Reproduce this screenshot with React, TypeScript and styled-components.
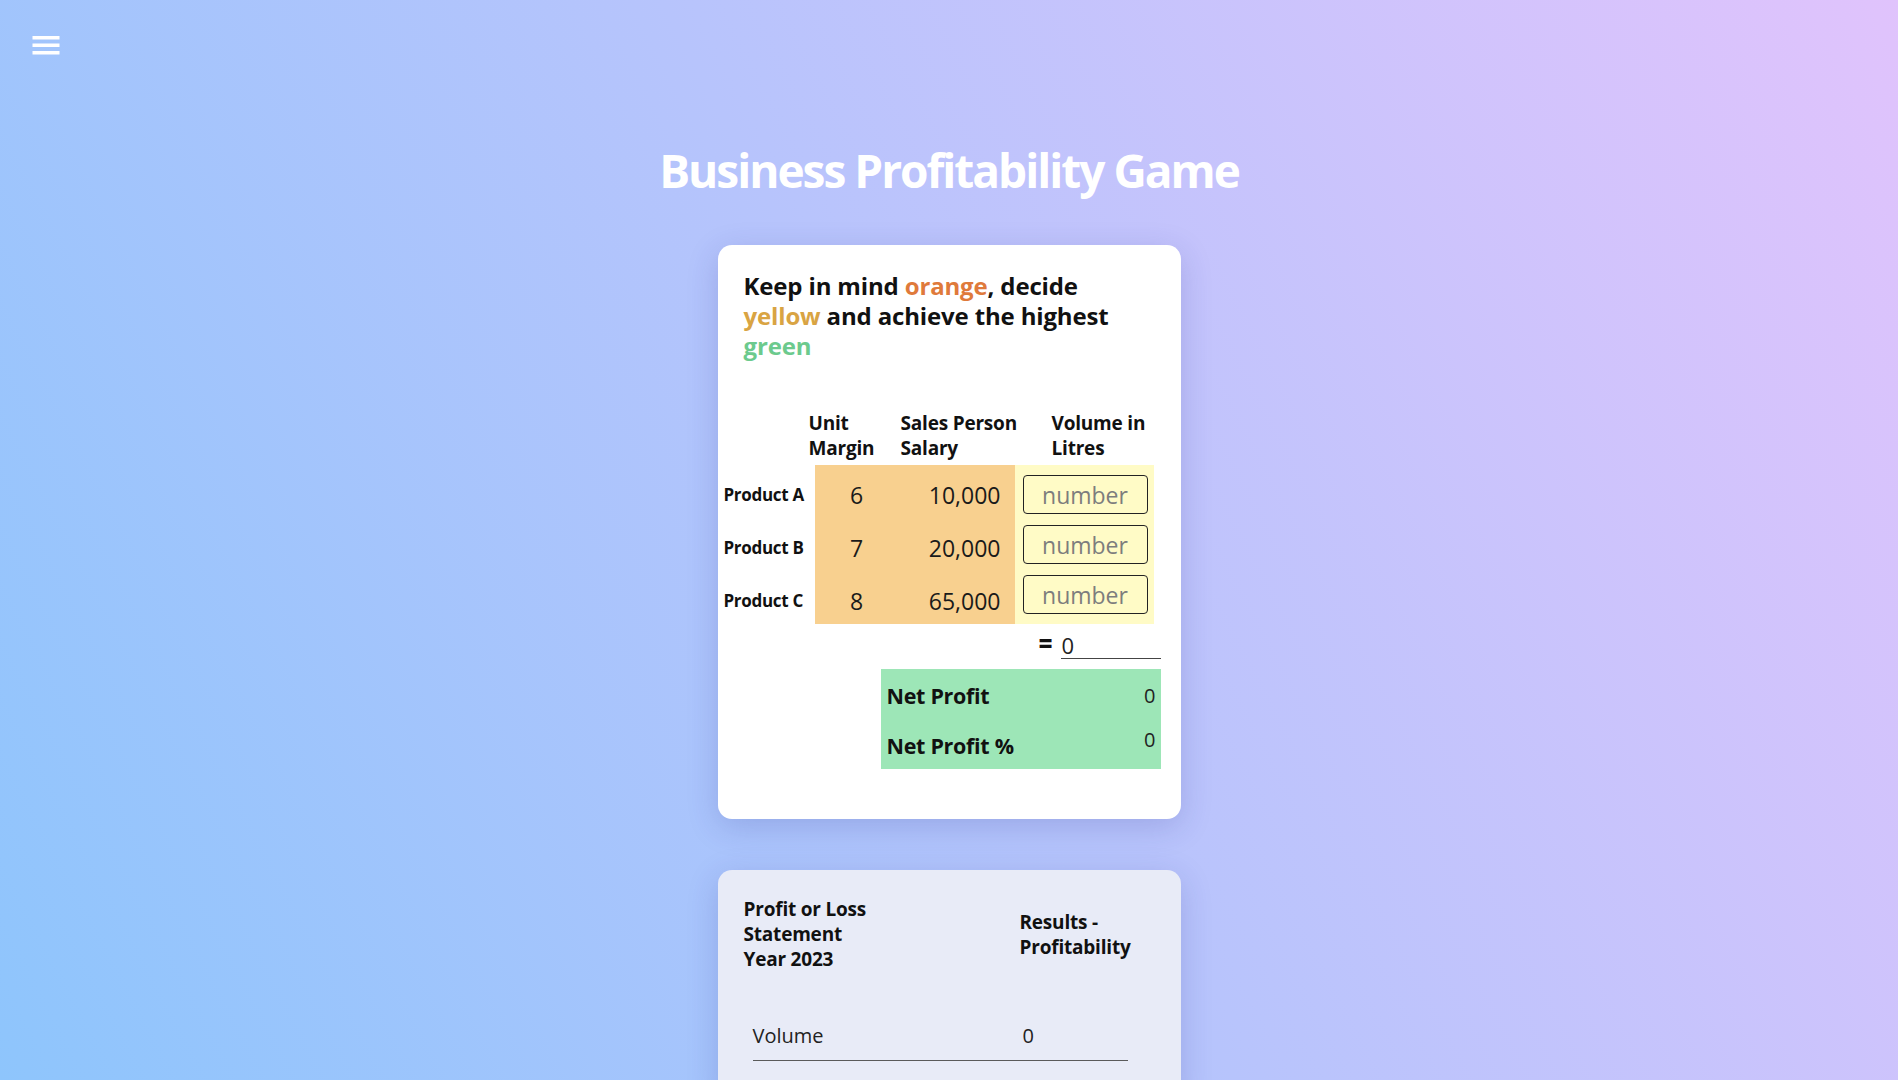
import React from "react";
import styled, { createGlobalStyle } from "styled-components";

const GlobalStyle = createGlobalStyle`
  html { scrollbar-width: none; }
  html::-webkit-scrollbar { display: none; }
  body {
    margin: 0;
    min-height: 100vh;
    font-family: "Open Sans", "Noto Sans", "DejaVu Sans", sans-serif;
    color: #111;
    background: linear-gradient(62deg, #8ec5fc 0%, #e0c3fc 100%) fixed;
  }
  * { box-sizing: border-box; }
`;

const Page = styled.div`
  display: flex;
  flex-direction: column;
  align-items: center;
  padding-bottom: 60px;
`;

const TopBar = styled.div`
  align-self: stretch;
  display: flex;
  padding: 27px 0 0 28px;
`;

const MenuButton = styled.button`
  width: 36px;
  height: 36px;
  padding: 0;
  border: none;
  background: transparent;
  display: flex;
  cursor: pointer;
`;

const Title = styled.h1`
  margin: 80px 0 0;
  font-size: 46px;
  line-height: 1.2;
  font-weight: 700;
  letter-spacing: -2px;
  color: #fff;
`;

const Card = styled.section<{ $tone?: "white" | "mist" }>`
  width: 463px;
  margin-top: ${(p) => (p.$tone === "mist" ? "51px" : "47px")};
  border-radius: 14px;
  background: ${(p) => (p.$tone === "mist" ? "#e8ebf7" : "#fff")};
  box-shadow: 0 8px 32px rgba(31, 38, 135, 0.18);
  padding: ${(p) => (p.$tone === "mist" ? "27px 0 40px" : "26px 0 50px")};
`;

const Lead = styled.p`
  margin: 0;
  padding: 0 20px 0 26px;
  font-size: 24px;
  line-height: 30px;
  font-weight: 700;
  letter-spacing: -0.15px;
`;

const Hue = styled.span<{ $c: string }>`
  color: ${(p) => p.$c};
`;

const HeadRow = styled.div`
  display: grid;
  grid-template-columns: 91px 92px 151px 1fr;
  margin-top: 50px;
  font-size: 19px;
  line-height: 25px;
  font-weight: 700;
  letter-spacing: -0.2px;
`;

const TableBody = styled.div`
  display: grid;
  grid-template-columns: 97px 84px 116px 139px;
  grid-template-rows: repeat(3, 53px);
  margin-top: 4px;
`;

const RowLabel = styled.div`
  display: flex;
  align-items: center;
  padding-left: 6px;
  padding-top: 5px;
  font-size: 17px;
  font-weight: 700;
  letter-spacing: -0.3px;
  white-space: nowrap;
`;

const FixedCell = styled.div<{ $align: "center" | "right" }>`
  display: flex;
  align-items: center;
  justify-content: ${(p) => (p.$align === "center" ? "center" : "flex-end")};
  padding: 6px ${(p) => (p.$align === "center" ? "0" : "14px")} 0 0;
  background: #f8d08f;
  font-size: 23px;
  color: #1a1a1a;
`;

const VolumeColumn = styled.div`
  grid-column: 4;
  grid-row: 1 / span 3;
  display: flex;
  flex-direction: column;
  gap: 11px;
  padding: 10px 6px 10px 8px;
  background: #fffbc6;
`;

const VolumeInput = styled.input`
  width: 125px;
  height: 39px;
  border: 1px solid #222;
  border-radius: 4px;
  background: #fffbc6;
  font-family: inherit;
  font-size: 23px;
  text-align: center;
  color: #222;
  padding: 0;
  -moz-appearance: textfield;
  &::-webkit-inner-spin-button,
  &::-webkit-outer-spin-button {
    -webkit-appearance: none;
    margin: 0;
  }
  &::placeholder { color: #7d7d7d; }
  &:focus { outline: none; }
`;

const SumRow = styled.div`
  display: flex;
  justify-content: flex-end;
  align-items: flex-end;
  gap: 8px;
  margin-top: 7px;
  padding-right: 20px;
`;

const SumSign = styled.span`
  font-size: 24px;
  line-height: 24px;
  font-weight: 800;
  padding-bottom: 4px;
`;

const SumValue = styled.div`
  width: 100px;
  height: 25px;
  border-bottom: 1px solid #444;
  font-size: 22px;
  line-height: 22px;
  color: #222;
  padding-left: 1px;
`;

const ProfitBox = styled.div`
  margin: 10px 20px 0 auto;
  width: 280px;
  height: 100px;
  background: #9de6b7;
  display: grid;
  grid-template-rows: 50px 50px;
`;

const ProfitRow = styled.div<{ $lift?: boolean }>`
  display: flex;
  justify-content: space-between;
  align-items: ${(p) => (p.$lift ? "flex-start" : "center")};
  padding: ${(p) => (p.$lift ? "7px 5px 0 6px" : "2px 5px 0 6px")};
`;

const ProfitLabel = styled.span<{ $lift?: boolean }>`
  font-size: 21.5px;
  font-weight: 700;
  letter-spacing: -0.3px;
  padding-top: ${(p) => (p.$lift ? "5px" : "0")};
`;

const ProfitValue = styled.span`
  font-size: 20px;
  color: #222;
`;

const StatementHead = styled.div`
  display: grid;
  grid-template-columns: 276px 1fr;
  align-items: center;
  padding-left: 26px;
  font-size: 19px;
  line-height: 25px;
  font-weight: 700;
  letter-spacing: -0.2px;
`;

const StatementRow = styled.div`
  display: grid;
  grid-template-columns: 270px 1fr;
  margin: 50px 0 0 35px;
  width: 375px;
  padding-bottom: 11px;
  border-bottom: 1px solid #5a5a5a;
  font-size: 20px;
  color: #222;
`;

const MenuIcon = () => (
  <svg width="36" height="36" viewBox="0 0 24 24" fill="#fff">
    <path d="M3 6h18v2.3H3zM3 11h18v2.3H3zM3 16h18v2.3H3z" />
  </svg>
);

const products = [
  { name: "Product A", margin: "6", salary: "10,000" },
  { name: "Product B", margin: "7", salary: "20,000" },
  { name: "Product C", margin: "8", salary: "65,000" },
];

export default function App() {
  return (
    <>
      <GlobalStyle />
      <Page>
        <TopBar>
          <MenuButton aria-label="menu">
            <MenuIcon />
          </MenuButton>
        </TopBar>
        <Title>Business Profitability Game</Title>
        <Card>
          <Lead>
            Keep in mind <Hue $c="#df7a3b">orange</Hue>, decide
            <br />
            <Hue $c="#d9a443">yellow</Hue> and achieve the highest
            <br />
            <Hue $c="#6cca8d">green</Hue>
          </Lead>
          <HeadRow>
            <span />
            <span>
              Unit
              <br />
              Margin
            </span>
            <span>
              Sales Person
              <br />
              Salary
            </span>
            <span>
              Volume in
              <br />
              Litres
            </span>
          </HeadRow>
          <TableBody>
            {products.map((p, i) => (
              <React.Fragment key={p.name}>
                <RowLabel style={{ gridRow: i + 1 }}>{p.name}</RowLabel>
                <FixedCell $align="center" style={{ gridRow: i + 1 }}>
                  {p.margin}
                </FixedCell>
                <FixedCell $align="right" style={{ gridRow: i + 1 }}>
                  {p.salary}
                </FixedCell>
              </React.Fragment>
            ))}
            <VolumeColumn>
              {products.map((p) => (
                <VolumeInput key={p.name} type="number" placeholder="number" />
              ))}
            </VolumeColumn>
          </TableBody>
          <SumRow>
            <SumSign>=</SumSign>
            <SumValue>0</SumValue>
          </SumRow>
          <ProfitBox>
            <ProfitRow>
              <ProfitLabel>Net Profit</ProfitLabel>
              <ProfitValue>0</ProfitValue>
            </ProfitRow>
            <ProfitRow $lift>
              <ProfitLabel $lift>Net Profit %</ProfitLabel>
              <ProfitValue>0</ProfitValue>
            </ProfitRow>
          </ProfitBox>
        </Card>
        <Card $tone="mist">
          <StatementHead>
            <span>
              Profit or Loss
              <br />
              Statement
              <br />
              Year 2023
            </span>
            <span>
              Results -
              <br />
              Profitability
            </span>
          </StatementHead>
          <StatementRow>
            <span>Volume</span>
            <span>0</span>
          </StatementRow>
        </Card>
      </Page>
    </>
  );
}
